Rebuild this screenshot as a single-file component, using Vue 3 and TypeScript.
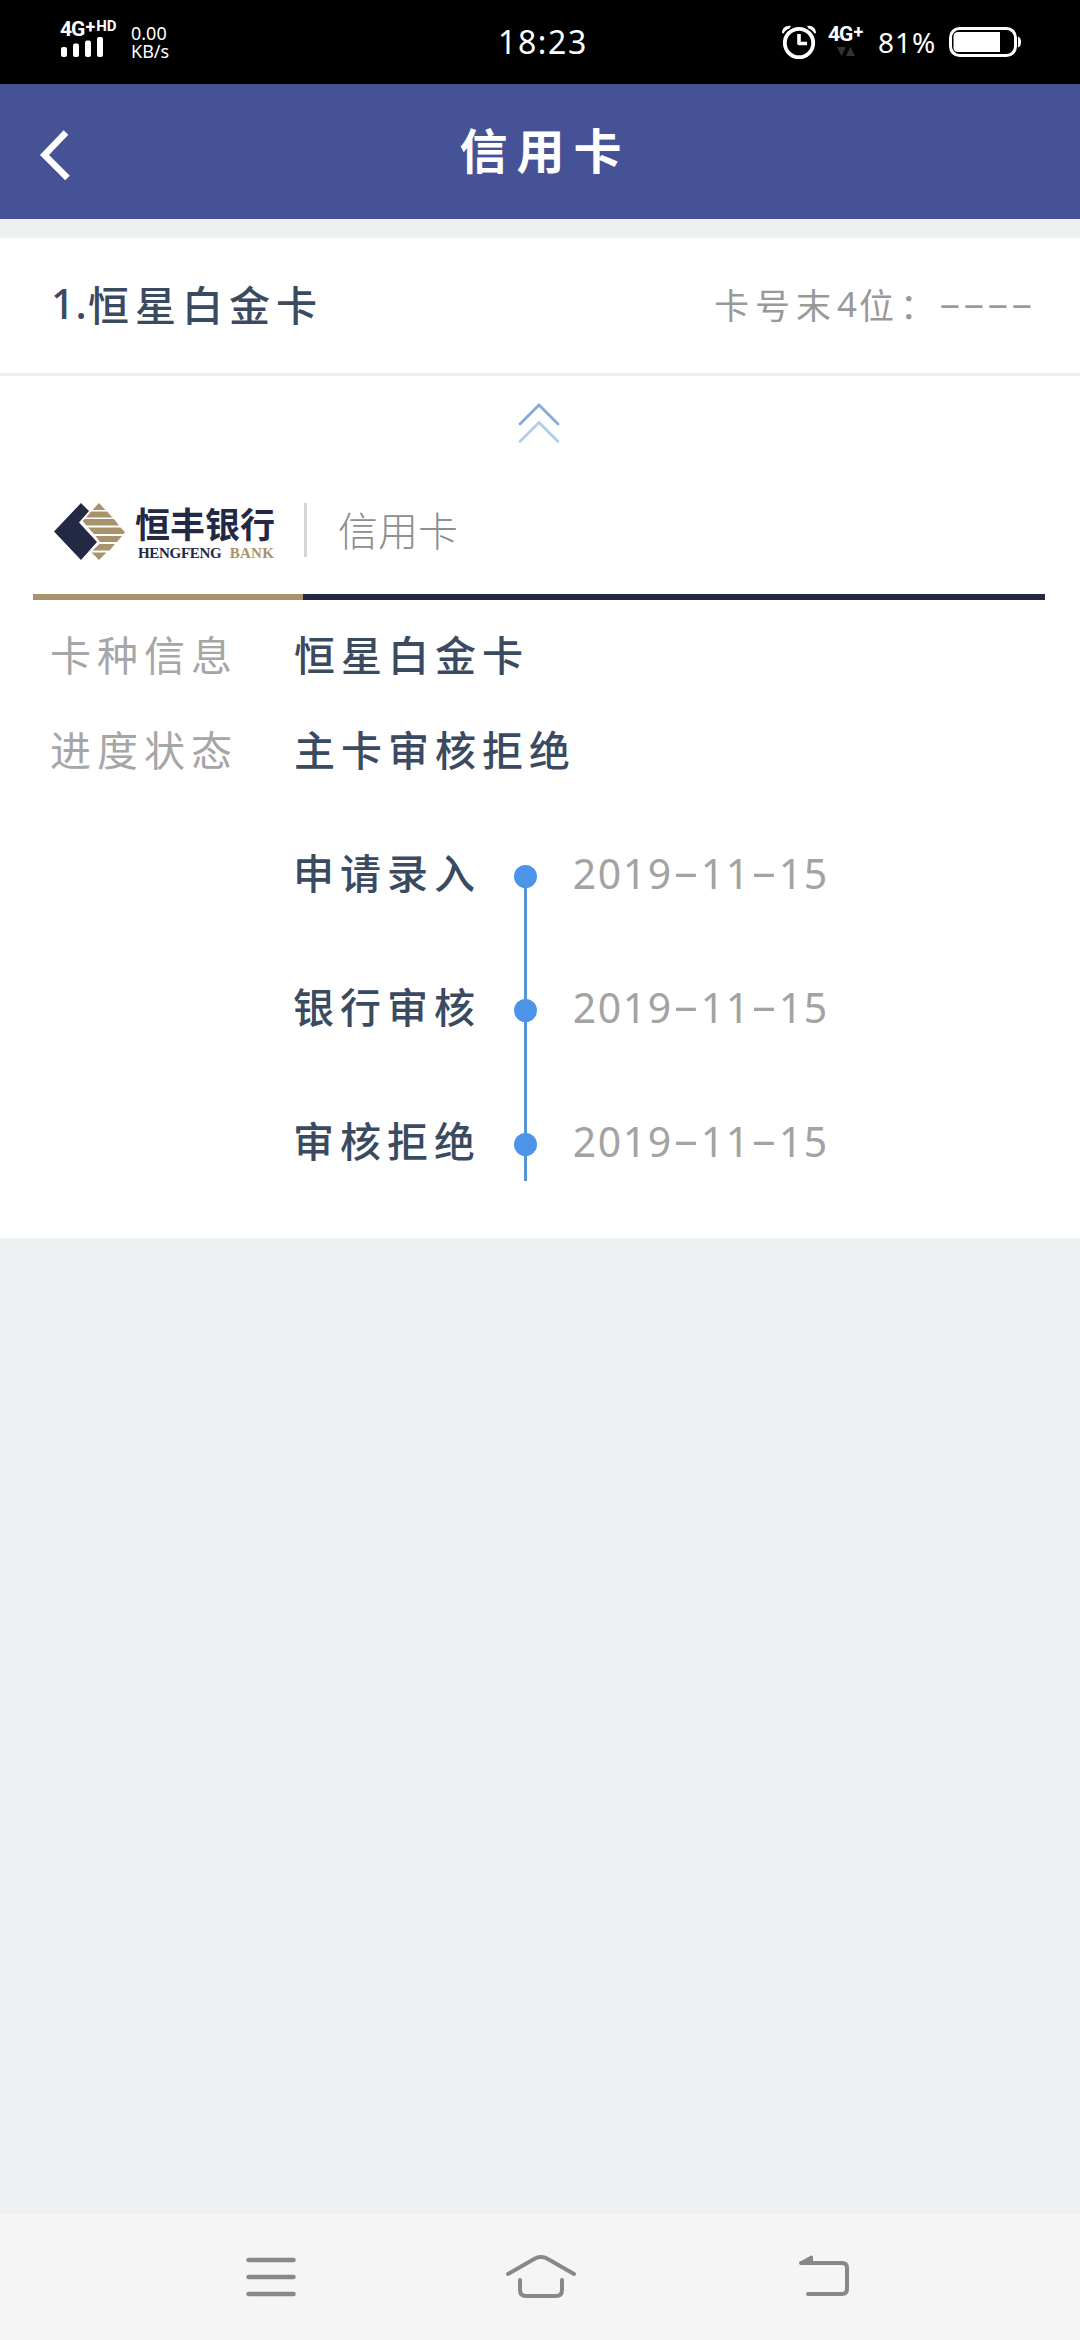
<script setup lang="ts">
interface Step {
  label: string
  date: string
}

const steps: Step[] = [
  { label: '申请录入', date: '2019-11-15' },
  { label: '银行审核', date: '2019-11-15' },
  { label: '审核拒绝', date: '2019-11-15' },
]

const details = [
  { label: '卡种信息', value: '恒星白金卡' },
  { label: '进度状态', value: '主卡审核拒绝' },
]
</script>

<template>
  <div class="screen">
    <div class="status">
      <div class="signal">
        <div class="net"><span>4G</span><span class="plus">+</span><span class="hd">HD</span></div>
        <svg width="44" height="20" viewBox="0 0 44 20" fill="#fff">
          <rect x="1" y="10" width="6" height="10" rx="2" />
          <rect x="13" y="6.500" width="6" height="13.500" rx="2" />
          <rect x="25" y="3.500" width="6" height="16.500" rx="2" />
          <rect x="37" y="0" width="6" height="20" rx="2" />
        </svg>
      </div>
      <div class="speed"><span>0.00</span><span>KB/s</span></div>
      <div class="clock">18:23</div>
      <svg class="alarm" width="36" height="36" viewBox="0 0 36 36" fill="none" stroke="#fff">
        <circle cx="18" cy="19" r="14.200" stroke-width="3.800" />
        <path d="M18 10v9.500h8" stroke-width="3.600" stroke-linejoin="round" />
        <path d="M1 9C1 4 5 1 10 2L8.500 4.500C5.500 5.500 4 7 2.500 9.500ZM35 9C35 4 31 1 26 2L27.500 4.500C30.500 5.500 32 7 33.500 9.500Z" fill="#fff" stroke="none" />
      </svg>
      <div class="data">
        <div class="net"><span>4G</span><span class="plus">+</span></div>
        <svg width="18" height="9" viewBox="0 0 18 9" fill="#333"><path d="M0 0h9L4.500 9ZM9 9h9L13.500 0Z" /></svg>
      </div>
      <div class="percent">81%</div>
      <svg class="battery" width="73" height="30" viewBox="0 0 73 30">
        <rect x="1.500" y="1.500" width="65" height="27" rx="9" fill="none" stroke="#fff" stroke-width="3" />
        <path d="M9 5H51V25H9Q4.500 25 4.500 20.500V9.500Q4.500 5 9 5Z" fill="#fff" />
        <path d="M69 9.500q3 1 3 5.500t-3 5.500z" fill="#fff" />
      </svg>
    </div>

    <header class="bar">
      <svg class="back" width="34" height="54" viewBox="0 0 34 54" fill="none" stroke="#fff" stroke-width="6.500">
        <path d="M29 4.500L7.500 27L30.500 50" />
      </svg>
      <h1>信用卡</h1>
    </header>

    <section class="card">
      <div class="head">
        <div class="name"><span class="num">1.</span>恒星白金卡</div>
        <div class="tail">卡号末<span class="four">4</span>位<span class="colon">：</span><span v-for="n in 4" :key="n" class="dash"><i>-</i></span></div>
      </div>

      <div class="collapse">
        <svg width="44" height="44" viewBox="0 0 44 44" fill="none" stroke-width="2.800" stroke-linecap="round">
          <path d="M3 23L22 4L41 23" stroke="#82aada" />
          <path d="M3 40.500L22 21.500L41 40.500" stroke="#b0cdea" />
        </svg>
      </div>

      <div class="brand">
        <svg class="mark" width="72" height="58" viewBox="0 0 72 58">
          <path d="M0 28.500L27 0L35 8L25 19.500L43 39L27 57Z" fill="#232845" />
          <g fill="#a8936c">
            <path d="M45 0L51.500 7H38.500Z" />
            <path d="M37 8.500H53L58.500 14.500H32Z" />
            <path d="M30.500 16H60L65 22.500H32.500L28.500 18Z" />
            <path d="M34 24.500H66.500L71 29L69.500 31H40Z" />
            <path d="M41.500 33H68L63 39H46Z" />
            <path d="M45.500 41H61L55.500 47.500H38.500Z" />
            <path d="M37.500 49.500H52.500L45 57Z" />
          </g>
        </svg>
        <div class="bank">
          <div class="cn">恒丰银行</div>
          <div class="en"><span>HENGFENG</span><span class="gold">BANK</span></div>
        </div>
        <div class="sep"></div>
        <div class="product">信用卡</div>
      </div>
      <div class="rule"></div>

      <div class="details">
        <div v-for="d in details" :key="d.label" class="row">
          <span class="label">{{ d.label }}</span>
          <span class="value">{{ d.value }}</span>
        </div>
      </div>

      <div class="timeline">
        <div v-for="s in steps" :key="s.label" class="step">
          <span class="label">{{ s.label }}</span>
          <span class="track"><i class="dot"></i></span>
          <span class="date"><span v-for="(c, i) in s.date" :key="i" :class="c === '-' ? 'hy' : 'dg'">{{ c }}</span></span>
        </div>
      </div>
    </section>

    <nav class="nav">
      <svg width="50" height="44" viewBox="0 0 50 44" stroke="#888" stroke-width="4.500" stroke-linecap="round">
        <path d="M2.500 5H47.500M2.500 22H47.500M2.500 39H47.500" />
      </svg>
      <svg class="home" width="72" height="44" viewBox="0 0 72 44" fill="none" stroke="#888" stroke-width="4" stroke-linecap="round" stroke-linejoin="round">
        <path d="M3 19L30 3.500Q36 0.500 42 3.500L69 19" />
        <path d="M15 25V35Q15 41 21 41H51Q57 41 57 35V25" />
      </svg>
      <svg width="52" height="44" viewBox="0 0 52 44" fill="none" stroke="#888" stroke-width="4" stroke-linecap="round">
        <path d="M3 8H44Q49 8 49 13V34Q49 39 44 39H10" />
        <path d="M1.500 7L13 0.500Q15 0 15 2V9H2Z" fill="#888" stroke="none" />
      </svg>
    </nav>
  </div>
</template>

<style>
body {
  margin: 0;
  background: #edf1f2;
}
</style>

<style scoped>
.screen {
  display: flex;
  flex-direction: column;
  width: 1080px;
  height: 2340px;
  overflow: hidden;
  background: #edf1f2;
  font-family: "Noto Sans CJK SC", sans-serif;
}
svg {
  display: block;
  flex: none;
}
.status {
  display: flex;
  flex: none;
  height: 84px;
  background: #000;
  color: #fff;
  font-family: "Noto Sans", sans-serif;
  white-space: nowrap;
}
.signal {
  width: 71px;
  padding: 21px 0 0 60px;
}
.net {
  display: flex;
  height: 16px;
  font: bold 21px/17px Roboto, sans-serif;
  letter-spacing: -1px;
}
.plus {
  margin-left: 1px;
  font-size: 18px;
  line-height: 11px;
}
.hd {
  margin-left: 2px;
  font-size: 15px;
  line-height: 11px;
  letter-spacing: 0;
}
.speed {
  display: flex;
  flex-direction: column;
  width: 367px;
  padding-top: 24px;
  font-size: 18px;
  line-height: 18px;
}
.clock {
  width: 283px;
  font-size: 32px;
  line-height: 84px;
  letter-spacing: 1.600px;
}
.alarm {
  margin-top: 24px;
}
.data {
  width: 50px;
  padding: 26px 0 0 11px;
}
.data svg {
  margin: 5px 0 0 9px;
}
.percent {
  width: 71px;
  font-size: 28px;
  line-height: 84px;
  letter-spacing: 1px;
}
.battery {
  margin-top: 27px;
}
.bar {
  display: grid;
  grid-template-columns: 110px 1fr 110px;
  flex: none;
  height: 135px;
  background: #465296;
  color: #fff;
}
.back {
  margin: 44px 0 0 37px;
}
h1 {
  margin: 0;
  font-size: 48px;
  font-weight: 700;
  line-height: 128px;
  letter-spacing: 9px;
  text-align: center;
  text-indent: 10px;
}
.card {
  flex: none;
  height: 1000px;
  margin-top: 19px;
  background: #fff;
}
.head {
  display: flex;
  justify-content: space-between;
  height: 135px;
  padding: 0 46px 0 51px;
  border-bottom: 3px solid #eef1f1;
  line-height: 131px;
}
.name {
  display: flex;
  font-size: 41px;
  font-weight: 500;
  letter-spacing: 6px;
  color: #3a4a60;
}
.num {
  width: 37px;
  font-family: "Noto Sans", sans-serif;
  letter-spacing: 1px;
}
.tail {
  display: flex;
  font-size: 35px;
  letter-spacing: 6px;
  color: #999;
}
.four {
  width: 22px;
  font-family: "Noto Sans", sans-serif;
}
.colon {
  width: 38px;
}
.dash {
  width: 24px;
  letter-spacing: 0;
  text-align: center;
}
.dash i {
  display: inline-block;
  font: normal 35px "Liberation Sans", sans-serif;
  transform: translateY(-3px) scaleX(2);
}
.collapse {
  display: flex;
  height: 97px;
  padding-left: 517px;
}
.collapse svg {
  margin-top: 25px;
}
.brand {
  display: flex;
  height: 121px;
  padding-left: 54px;
}
.mark {
  margin-top: 30px;
}
.bank {
  width: 169px;
  padding: 30px 0 0 9px;
  color: #232845;
}
.cn {
  font-size: 35px;
  font-weight: 700;
  line-height: 40px;
}
.en {
  display: flex;
  justify-content: space-between;
  width: 136px;
  padding: 2px 0 0 3px;
  font: bold 15px/16px "Liberation Serif", serif;
  letter-spacing: -0.300px;
}
.gold {
  color: #a8936c;
  letter-spacing: 0.200px;
}
.sep {
  width: 3px;
  height: 54px;
  margin-top: 30px;
  background: #d6d6d6;
}
.product {
  margin-left: 31px;
  font-size: 40px;
  font-weight: 300;
  line-height: 112px;
  color: #8e8e8e;
}
.rule {
  height: 6px;
  margin: 0 35px 0 33px;
  background: linear-gradient(to right, #a8936c 270px, #232845 270px);
}
.details {
  padding-top: 7px;
}
.row {
  display: flex;
  height: 94.500px;
  padding-left: 50px;
  font-size: 41px;
  line-height: 92px;
  letter-spacing: 6px;
}
.row .label {
  width: 244px;
  color: #a6a6a6;
}
.value {
  font-weight: 500;
  color: #3a4a60;
}
.timeline {
  padding-top: 24px;
}
.step {
  display: flex;
  height: 134px;
  line-height: 102px;
}
.step .label {
  width: 221px;
  padding-left: 293px;
  font-size: 41px;
  font-weight: 500;
  letter-spacing: 6px;
  color: #3a4a60;
}
.track {
  display: flex;
  align-items: flex-start;
  justify-content: center;
  width: 23px;
  height: 134px;
  margin-top: 57px;
  background: linear-gradient(#5694d6, #5694d6) center / 3px 100% no-repeat;
}
.step:last-child .track {
  height: 36px;
}
.dot {
  width: 23px;
  height: 23px;
  margin-top: -12px;
  border-radius: 50%;
  background: #4d94e9;
}
.date {
  display: flex;
  padding-left: 35px;
  font: 41px/106px "Noto Sans", sans-serif;
  color: #a3a3a3;
}
.dg {
  width: 25px;
  text-align: center;
}
.hy {
  width: 28px;
  text-align: center;
  transform: translateY(-2px) scaleX(2);
}
.nav {
  display: flex;
  justify-content: space-between;
  flex: none;
  height: 85px;
  box-sizing: content-box;
  margin-top: auto;
  padding: 41px 230px 0 246px;
  background: #f5f5f5;
  box-sizing: border-box;
  height: 126px;
}
.home {
  margin-right: 12px;
}
</style>
